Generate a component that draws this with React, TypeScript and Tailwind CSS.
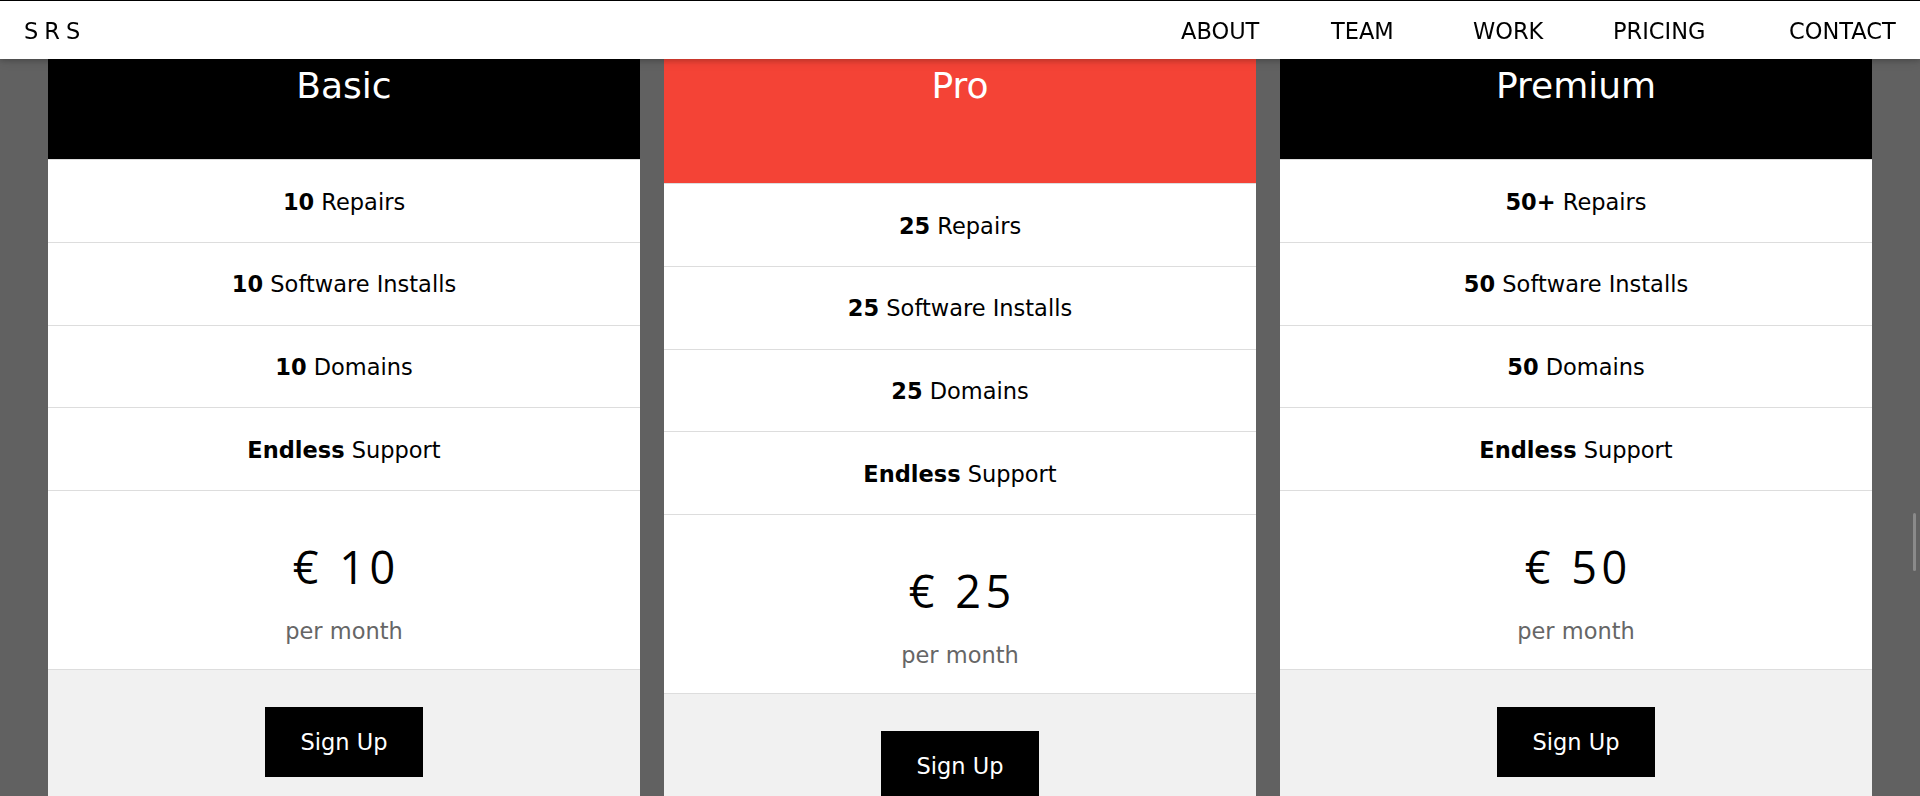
const font = { fontFamily: '"DejaVu Sans", Verdana, sans-serif' };

type Plan = {
  name: string;
  head: string;
  pad: string;
  top: string;
  rows: [string, string][];
  price: string;
};

const plans: Plan[] = [
  {
    name: "Basic",
    head: "bg-black",
    pad: "pt-[49.5px] pb-[46.5px]",
    top: "mt-[24px]",
    rows: [
      ["10", "Repairs"],
      ["10", "Software Installs"],
      ["10", "Domains"],
      ["Endless", "Support"],
    ],
    price: "10",
  },
  {
    name: "Pro",
    head: "bg-[#f44336]",
    pad: "pt-[73.5px] pb-[70.5px]",
    top: "mt-0",
    rows: [
      ["25", "Repairs"],
      ["25", "Software Installs"],
      ["25", "Domains"],
      ["Endless", "Support"],
    ],
    price: "25",
  },
  {
    name: "Premium",
    head: "bg-black",
    pad: "pt-[49.5px] pb-[46.5px]",
    top: "mt-[24px]",
    rows: [
      ["50+", "Repairs"],
      ["50", "Software Installs"],
      ["50", "Domains"],
      ["Endless", "Support"],
    ],
    price: "50",
  },
];

// text widths + gaps taken from the original bar
const navItems = [
  { label: "ABOUT", cls: "w-[78px]" },
  { label: "TEAM", cls: "ml-[72px] w-[61px]" },
  { label: "WORK", cls: "ml-[81px] w-[70px]" },
  { label: "PRICING", cls: "ml-[70px] w-[96px]" },
  { label: "CONTACT", cls: "ml-[80px] w-[107px]" },
];

const PriceCard = ({ plan }: { plan: Plan }) => (
  <ul className={`flex-1 bg-white text-center ${plan.top}`}>
    {/* header */}
    <li
      className={`${plan.head} ${plan.pad} text-white text-[36px] leading-[54px] border-b border-[#ddd]`}
    >
      {plan.name}
    </li>

    {/* features */}
    {plan.rows.map(([bold, rest], key) => (
      <li
        key={key}
        className="pt-[25.5px] pb-[22.5px] text-[22.5px] leading-[33.75px] text-black border-b border-[#ddd]"
      >
        <b className="font-bold">{bold}</b> {rest}
      </li>
    ))}

    {/* price */}
    <li className="pt-[24px] pb-[20.5px] border-b border-[#ddd]">
      <h2
        className="mt-[18.5px] mb-[15px] text-[45px] leading-[66px] tracking-[4.5px] pl-[4.5px] font-normal text-black"
        style={{ fontFamily: '"Open Sans", "Liberation Sans", sans-serif' }}
      >
        € {plan.price}
      </h2>
      <span className="text-[22.5px] leading-[33.75px] text-[#666]">
        per month
      </span>
    </li>

    {/* sign up */}
    <li className="bg-[#f1f1f1] pt-[37px] pb-[35px]">
      <button className="bg-black text-white px-[36px] pt-[19.5px] pb-[16.5px] text-[22.5px] leading-[33.75px]">
        Sign Up
      </button>
    </li>
  </ul>
);

const App = () => {
  return (
    <div className="min-h-screen h-[796px] overflow-hidden bg-[#616161]" style={font}>
      {/* top bar */}
      <div className="fixed top-0 left-0 right-0 z-10 flex items-center justify-between bg-white border-t border-black shadow-[0_2px_5px_0_rgba(0,0,0,0.16),0_2px_10px_0_rgba(0,0,0,0.12)]">
        <span className="pl-[24px] pt-[14px] pb-[10px] text-[22.5px] leading-[33.75px] tracking-[6px] text-black">
          SRS
        </span>
        <div className="flex pr-[24px]">
          {navItems.map((item) => (
            <span
              key={item.label}
              className={`${item.cls} pt-[14px] pb-[10px] text-[22.5px] leading-[33.75px] text-black whitespace-nowrap`}
            >
              {item.label}
            </span>
          ))}
        </div>
      </div>

      {/* pricing */}
      <div className="-mt-[15px] flex items-start gap-[24px] px-[48px]">
        {plans.map((plan) => (
          <PriceCard key={plan.name} plan={plan} />
        ))}
      </div>

      {/* overlay scrollbar thumb */}
      <div className="fixed top-[513px] right-[4px] w-[3px] h-[58px] rounded-full bg-[#8a8a8a]" />
    </div>
  );
};

export default App;
